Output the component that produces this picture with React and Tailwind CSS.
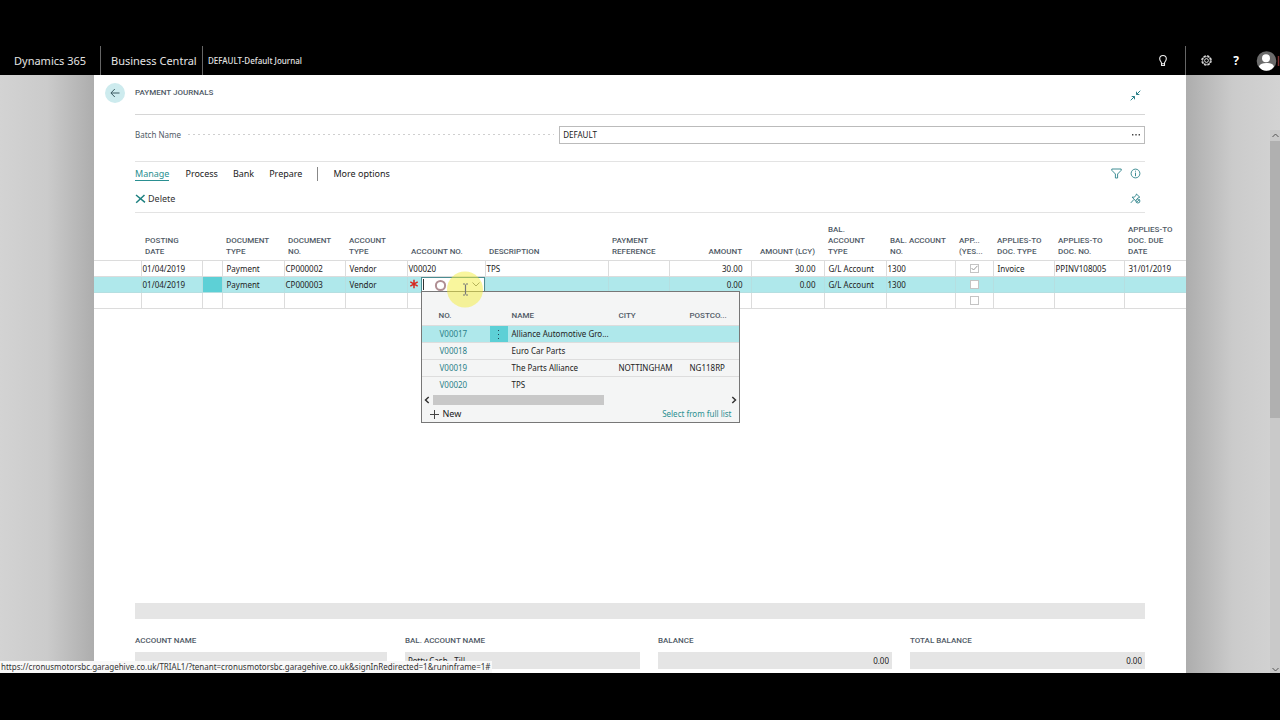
import React from "react";

const HEAD = "font-['Roboto','Liberation_Sans',sans-serif] text-[8px] leading-[11px] font-medium text-[#505a66]";

const columns = [
  { id: "sel", label: "", width: "w-[47px]" },
  { id: "date", label: "POSTING DATE", width: "w-[61px]", pad: "pl-1 pr-3", cell: "pl-px" },
  { id: "menu", label: "", width: "w-[20px]" },
  { id: "docType", label: "DOCUMENT TYPE", width: "w-[62px]", pad: "pl-1 pr-3", cell: "pl-1" },
  { id: "docNo", label: "DOCUMENT NO.", width: "w-[61px]", pad: "pl-1 pr-3", cell: "pl-px" },
  { id: "accType", label: "ACCOUNT TYPE", width: "w-[62px]", pad: "pl-1 pr-3", cell: "pl-1" },
  { id: "accNo", label: "ACCOUNT NO.", width: "w-[78px]", pad: "pl-1", cell: "pl-px" },
  { id: "desc", label: "DESCRIPTION", width: "w-[123px]", pad: "pl-1", cell: "pl-px" },
  { id: "payRef", label: "PAYMENT REFERENCE", width: "w-[61px]", pad: "pl-1", cell: "pl-px" },
  { id: "amount", label: "AMOUNT", width: "w-[82px]", pad: "pr-[9px] text-right", cell: "pr-2 text-right" },
  { id: "amountLcy", label: "AMOUNT (LCY)", width: "w-[73px]", pad: "pr-[9px] text-right", cell: "pr-2 text-right" },
  { id: "balType", label: "BAL. ACCOUNT TYPE", width: "w-[62px]", pad: "pl-1 pr-4", cell: "pl-1" },
  { id: "balNo", label: "BAL. ACCOUNT NO.", width: "w-[69px]", pad: "pl-1", cell: "pl-px" },
  { id: "applied", label: "APP... (YES...", width: "w-[38px]", pad: "pl-1 pr-2", cell: "" },
  { id: "appType", label: "APPLIES-TO DOC. TYPE", width: "w-[61px]", pad: "pl-1", cell: "pl-1" },
  { id: "appNo", label: "APPLIES-TO DOC. NO.", width: "w-[70px]", pad: "pl-1 pr-3", cell: "pl-px" },
  { id: "dueDate", label: "APPLIES-TO DOC. DUE DATE", width: "", pad: "pl-1 pr-2", cell: "pl-1" },
];

const rows = [
  { date: "01/04/2019", docType: "Payment", docNo: "CP000002", accType: "Vendor", accNo: "V00020", desc: "TPS", amount: "30.00", amountLcy: "30.00", balType: "G/L Account", balNo: "1300", applied: true, appType: "Invoice", appNo: "PPINV108005", dueDate: "31/01/2019" },
  { date: "01/04/2019", docType: "Payment", docNo: "CP000003", accType: "Vendor", amount: "0.00", amountLcy: "0.00", balType: "G/L Account", balNo: "1300", applied: false, active: true },
  { applied: false },
];

const vendors = [
  { no: "V00017", name: "Alliance Automotive Gro...", active: true },
  { no: "V00018", name: "Euro Car Parts" },
  { no: "V00019", name: "The Parts Alliance", city: "NOTTINGHAM", post: "NG118RP" },
  { no: "V00020", name: "TPS" },
];

function TopBar() {
  return (
    <header className="flex h-[29px] shrink-0 items-center text-[#e4e4e4]">
      <a href="#dynamics" className="w-[100px] pl-[14px] text-[11px] leading-4">Dynamics 365</a>
      <a href="#bc" className="flex h-full w-[103px] items-center border-x border-[#666] pl-[10px] text-[11px] leading-4 whitespace-nowrap">Business Central</a>
      <span className="pl-[5px] text-[8px] leading-3 font-medium">DEFAULT-Default Journal</span>
      <button aria-label="Tell me" className="ml-auto flex w-[44px] items-center justify-center">
        <svg width="12" height="14" viewBox="0 0 12 14" fill="none" stroke="#eee" strokeWidth="1.1">
          <path d="M4.5 9.2C4.5 7.8 2.7 7 2.7 4.8a3.3 3.3 0 0 1 6.6 0C9.3 7 7.5 7.800 7.500 9.200V11.500h-3zM4.500 9.700h3" />
        </svg>
      </button>
      <button aria-label="Settings" className="flex h-full w-[41px] items-center justify-center border-l border-[#666]">
        <svg width="13" height="13" viewBox="0 0 13 13" fill="none" stroke="#ddd">
          <circle cx="6.500" cy="6.500" r="4.600" strokeWidth="1.400" strokeDasharray="2.400 1.210" />
          <circle cx="6.500" cy="6.500" r="3.900" strokeWidth=".7" />
          <circle cx="6.500" cy="6.500" r="1.900" strokeWidth="1" />
        </svg>
      </button>
      <button aria-label="Help" className="w-[20px] text-[12px] leading-4 font-bold text-white">?</button>
      <button aria-label="Account" className="ml-[10px] flex w-[24px] items-center">
        <svg width="24" height="20" viewBox="0 0 24 20">
          <circle cx="10.500" cy="10" r="9.800" fill="#6b6b6b" />
          <circle cx="10" cy="7.300" r="4" fill="#fff" />
          <path d="M2.800 15.500c1.500-3 4-3.500 7.500-3.500s6.500.5 7.700 3.500a9.500 9.500 0 0 1-7.500 4.300 9.500 9.500 0 0 1-7.700-4.300z" fill="#fff" />
          <path d="M22.500 5v10" stroke="#7a3030" strokeWidth="1.500" />
        </svg>
      </button>
    </header>
  );
}

function Ribbon() {
  return (
    <section className="mx-[41px] border-y border-[#e3e3e3]">
      <div className="flex h-[23px] items-center text-[9px] leading-3 text-[#222]">
        <button className="text-[#2a8f91] shadow-[0_1px_0_#2a8f91]">Manage</button>
        <button className="ml-4">Process</button>
        <button className="ml-[15px]">Bank</button>
        <button className="ml-[15px]">Prepare</button>
        <span className="ml-[15px] h-[14px] border-l border-[#888]" />
        <button className="ml-[15px]">More options</button>
        <button aria-label="Filter" className="ml-auto">
          <svg width="11" height="11" viewBox="0 0 11 11" fill="none" stroke="#2a8189" strokeWidth=".9">
            <path d="M.8 1h9.400v1.300L6.600 6v4H4.400V6L.8 2.300z" />
          </svg>
        </button>
        <button aria-label="Information" className="mr-1 ml-2">
          <svg width="11" height="11" viewBox="0 0 11 11" fill="none" stroke="#2a8189" strokeWidth=".9">
            <circle cx="5.500" cy="5.500" r="4.400" />
            <path d="M5.500 4.600v3.600M5.500 2.700v1" />
          </svg>
        </button>
      </div>
      <div className="flex h-[27px] items-center">
        <button className="flex items-center gap-0.5 text-[9px] leading-3 text-[#333]">
          <svg width="11" height="10" viewBox="0 0 11 10" fill="none" stroke="#1d8080" strokeWidth="1.500">
            <path d="M1 1 10 8.300M9.500 1 1.200 8.800" />
          </svg>
          Delete
        </button>
        <button aria-label="Pin" className="mr-1 ml-auto">
          <svg width="11" height="11" viewBox="0 0 11 11" fill="none" stroke="#2a8189" strokeWidth=".9">
            <path d="M6.400 1l3.400 3.200-1.300.2L6.700 6.200M6.400 1l-.3 1.400-2 1.800-2-.1 4 4.300M3.800 6.600.8 9.900" />
            <circle cx="7.900" cy="8" r="2" />
            <path d="M6.600 9.300 9.200 6.700" />
          </svg>
        </button>
      </div>
    </section>
  );
}

function VendorLookup() {
  return (
    <div className="absolute top-[14px] left-[13px] z-10 w-[319px] border border-[#777] bg-[#f4f5f5]">
      <table className="w-full table-fixed border-collapse">
        <colgroup>
          <col className="w-[68px]" />
          <col className="w-[18px]" />
          <col className="w-[107px]" />
          <col className="w-[71px]" />
          <col />
        </colgroup>
        <thead>
          <tr className={"h-[34px] border-b border-[#ddd] text-left " + HEAD}>
            <th className="pt-[15px] pl-[17px] font-medium">NO.</th>
            <th />
            <th className="pt-[15px] pl-1 font-medium">NAME</th>
            <th className="pt-[15px] pl-1 font-medium">CITY</th>
            <th className="pt-[15px] pl-1 font-medium">POSTCO...</th>
          </tr>
        </thead>
        <tbody>
          {vendors.map((v) => (
            <tr key={v.no} className={v.active ? "h-[17px] border-b border-[#ddd] bg-[#afe8eb]" : "h-[17px] border-b border-[#ddd] last:h-4 last:border-0"}>
              <td className="pl-[18px]"><a href={"#" + v.no} className="text-[#2a8189]">{v.no}</a></td>
              <td className={v.active ? "bg-[#5dd0d6]" : ""}>
                {v.active && (
                  <button aria-label="Row menu" className="flex w-full justify-center">
                    <svg width="3" height="9" viewBox="0 0 3 9" fill="#245"><path d="M1 0h1v1H1zM1 4h1v1H1zM1 8h1v1H1z" /></svg>
                  </button>
                )}
              </td>
              <td className="pl-1 whitespace-nowrap">{v.name}</td>
              <td className="pl-1">{v.city}</td>
              <td className="pl-1">{v.post}</td>
            </tr>
          ))}
        </tbody>
      </table>
      <div className="flex h-[14px] items-center px-0.5">
        <svg width="6" height="8" viewBox="0 0 5 7" fill="none" stroke="#333" strokeWidth="1.300"><path d="M4 .8 1.200 3.500 4 6.200" /></svg>
        <div className="mx-[3px] h-[10px] flex-1">
          <div className="h-full w-[58%] bg-[#c8c8c8]" />
        </div>
        <svg width="6" height="8" viewBox="0 0 5 7" fill="none" stroke="#333" strokeWidth="1.300"><path d="M1 .8 3.800 3.500 1 6.200" /></svg>
      </div>
      <div className="flex h-[15px] items-center justify-between pr-[7px] pl-2 leading-3">
        <button className="flex items-center gap-1 text-[9px]">
          <svg width="9" height="9" viewBox="0 0 9 9" stroke="#444"><path d="M4.500 0v9M0 4.500h9" /></svg>
          New
        </button>
        <a href="#full-list" className="text-[8px] text-[#2a8f91]">Select from full list</a>
      </div>
    </div>
  );
}

function AccountEditor() {
  return (
    <div className="relative flex h-[15px] items-stretch">
      <span className="flex w-[13px] items-center justify-center">
        <svg width="10" height="10" viewBox="0 0 10 10" stroke="#d6281f" strokeWidth="1.500"><path d="M5 .8v8.400M1.300 2.900l7.400 4.200M8.700 2.900 1.300 7.100" /></svg>
      </span>
      <span className="flex flex-1 items-center border border-[#4a8d92] bg-white">
        <span className="ml-px h-[11px] w-px shrink-0 bg-[#333]" />
        <input aria-label="Account No." className="w-0 min-w-0 flex-1 bg-transparent outline-none" />
        <svg className="mr-1" width="8" height="5" viewBox="0 0 8 5" fill="none" stroke="#666" strokeWidth=".9"><path d="M.5.5 4 4 7.500.5" /></svg>
      </span>
      <VendorLookup />
      <svg className="pointer-events-none absolute -top-1.5 left-[26px] z-20" width="50" height="37" viewBox="0 0 50 37" fill="none">
        <circle cx="31" cy="18.500" r="18" fill="#f3ee3c" fillOpacity=".5" />
        <circle cx="6.500" cy="14.500" r="4.600" stroke="#b08f93" strokeWidth="2" />
        <path d="M29 13h2M32 13h2M31.500 13.500v10M29 24h2M32 24h2" stroke="#777" strokeWidth="1.200" />
      </svg>
    </div>
  );
}

function Cell({ row, id }) {
  if (id === "applied") {
    return (
      <label className="relative flex items-center justify-center">
        <input type="checkbox" aria-label="Applied" defaultChecked={row.applied} className="h-[9px] w-[9px] appearance-none border border-[#c4c4c4] bg-white" />
        {row.applied && (
          <svg className="absolute" width="7" height="6" viewBox="0 0 7 6" fill="none" stroke="#999"><path d="M.5 3 2.500 5 6.500.8" /></svg>
        )}
      </label>
    );
  }
  if (id === "accNo" && row.active) return <AccountEditor />;
  return row[id] ?? null;
}

function Journal() {
  return (
    <table className="mt-[9px] w-full table-fixed border-collapse">
      <colgroup>
        {columns.map((c) => <col key={c.id} className={c.width} />)}
      </colgroup>
      <thead>
        <tr className="h-[38px]">
          {columns.map((c) => (
            <th key={c.id} className={"pb-[3px] text-left align-bottom " + HEAD + " " + (c.pad ?? "")}>{c.label}</th>
          ))}
        </tr>
      </thead>
      <tbody>
        {rows.map((row, i) => (
          <tr key={i} className={row.active ? "bg-[#afe8eb]" : ""}>
            {columns.map((c) => (
              <td
                key={c.id}
                className={
                  (row.active ? "border-[#b5dfe1] " : "border-[#dcdcdc] ") +
                  "h-4 border-y border-r whitespace-nowrap last:border-r-0 " +
                  (row.active && c.id === "menu" ? "bg-[#5dd0d6] " : "") +
                  (c.id === "applied" || (row.active && c.id === "accNo") ? "" : "pt-px " + (c.cell ?? ""))
                }
              >
                <Cell row={row} id={c.id} />
              </td>
            ))}
          </tr>
        ))}
      </tbody>
    </table>
  );
}

function Total({ label, value, right }) {
  return (
    <label className={"block " + HEAD}>
      {label}
      <input
        readOnly
        defaultValue={value}
        className={"mt-[6px] block h-[17px] w-full bg-[#e5e5e5] px-[3px] font-['Noto_Sans','Open_Sans',sans-serif] text-[8px] font-normal text-[#222] outline-none " + (right ? "text-right" : "")}
      />
    </label>
  );
}

export default function App() {
  return (
    <div className="flex h-screen flex-col overflow-hidden bg-black pt-[46px] pb-[47px] font-['Noto_Sans','Open_Sans',sans-serif] text-[8px] leading-3 text-[#222]">
      <TopBar />
      <main className="relative flex min-h-0 flex-1 bg-[#d0d0d0]">
        <div className="w-[94px] shrink-0 bg-linear-to-r from-[#d3d3d3] via-[#cbcbcb] to-[#adadad]" />
        <div className="flex min-w-0 flex-1 flex-col bg-white">
          <div className="flex h-[39px] shrink-0 items-start pr-[45px] pl-[11px]">
            <button aria-label="Back" className="mt-2 flex h-5 w-5 items-center justify-center rounded-full bg-[#cdebee]">
              <svg width="10" height="10" viewBox="0 0 10 10" fill="none" stroke="#3c5a62"><path d="M9.500 5H1M4.800 1 .9 5l3.900 4" /></svg>
            </button>
            <h1 className={"mt-3 ml-[10px] " + HEAD}>PAYMENT JOURNALS</h1>
            <button aria-label="Collapse" className="mt-[15px] ml-auto">
              <svg width="11" height="11" viewBox="0 0 11 11" fill="none" stroke="#2a8189">
                <path d="M10.300.7 6.500 4.500M6.500 1.700v2.800h2.800M.7 10.300 4.500 6.500M1.700 6.500h2.800v2.800" />
              </svg>
            </button>
          </div>
          <div className="mx-[41px] flex h-[47px] shrink-0 items-center border-t border-[#d6d6d6] pb-[7px]">
            <label htmlFor="batch" className="text-[#505a66]">Batch Name</label>
            <span className="mx-[5px] h-px flex-1 bg-[radial-gradient(circle,#cfcfcf_1px,transparent_1px)] bg-[length:5px_1px]" />
            <span className="flex h-[18px] w-[58%] items-center border border-[#bbb] pr-1 pl-[3px]">
              <input id="batch" defaultValue="DEFAULT" className="min-w-0 flex-1 outline-none" />
              <button aria-label="Choose batch">
                <svg width="8" height="2" viewBox="0 0 8 2" fill="#444"><path d="M0 0h1.400v1.400H0zM3.300 0h1.400v1.400H3.300zM6.600 0H8v1.400H6.600z" /></svg>
              </button>
            </span>
          </div>
          <Ribbon />
          <Journal />
          <div className="mx-[41px] mt-auto h-4 shrink-0 bg-[#e5e5e5]" />
          <section className="mx-[41px] mt-4 mb-1 grid shrink-0 grid-cols-[252fr_235fr_234fr_235fr] gap-[18px]">
            <Total label="ACCOUNT NAME" value="" />
            <Total label="BAL. ACCOUNT NAME" value="Petty Cash - Till" />
            <Total label="BALANCE" value="0.00" right />
            <Total label="TOTAL BALANCE" value="0.00" right />
          </section>
        </div>
        <div className="flex w-[94px] shrink-0 justify-end bg-linear-to-l from-[#d3d3d3] via-[#cbcbcb] to-[#adadad]">
          <div className="mt-[55px] flex w-[10px] flex-col items-center bg-[#c9c9c9]">
            <svg className="my-0.5 shrink-0" width="7" height="7" viewBox="0 0 7 7" fill="none" stroke="#555"><path d="M.5 5 3.500 2l3 3" /></svg>
            <div className="h-[51%] w-full bg-[#b0b0b0]" />
            <svg className="mt-auto shrink-0" width="7" height="7" viewBox="0 0 7 7" fill="none" stroke="#555"><path d="M.5 2 3.500 5l3-3" /></svg>
          </div>
        </div>
        <div className="absolute bottom-0 left-0 bg-[#f8f8f8] pr-0.5 pl-px text-[#333]">
          https://cronusmotorsbc.garagehive.co.uk/TRIAL1/?tenant=cronusmotorsbc.garagehive.co.uk&amp;signInRedirected=1&amp;runinframe=1#
        </div>
      </main>
    </div>
  );
}
